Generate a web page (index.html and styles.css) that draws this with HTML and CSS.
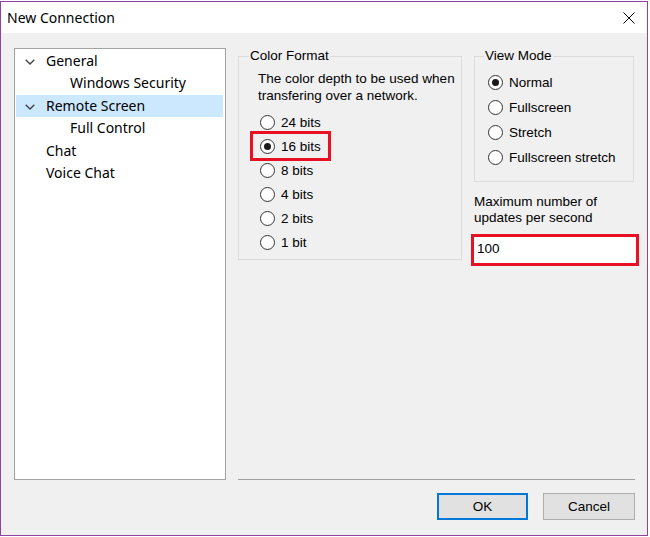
FILE: index.html
```html
<!DOCTYPE html>
<html>
<head>
<meta charset="utf-8">
<link rel="stylesheet" href="styles.css">
</head>
<body>
<div class="window">
  <div class="titlebar">
    <span class="title">New Connection</span>
    <span class="close">
      <svg width="12" height="12" viewBox="0 0 12 12"><path d="M0.5 0.5 L11.5 11.5 M11.5 0.5 L0.5 11.5" stroke="#000" stroke-width="1" fill="none"/></svg>
    </span>
  </div>
  <div class="client">
    <div class="tree">
      <div class="node"><span class="exp"><svg width="10" height="6" viewBox="0 0 10 6"><polyline points="0.7,0.7 5,5 9.3,0.7" fill="none" stroke="#444" stroke-width="1.4"/></svg></span>General</div>
      <div class="node child">Windows Security</div>
      <div class="node selected"><span class="exp"><svg width="10" height="6" viewBox="0 0 10 6"><polyline points="0.7,0.7 5,5 9.3,0.7" fill="none" stroke="#444" stroke-width="1.4"/></svg></span>Remote Screen</div>
      <div class="node child">Full Control</div>
      <div class="node leaf">Chat</div>
      <div class="node leaf">Voice Chat</div>
    </div>
    <div class="panel">
      <div class="groups">
        <fieldset class="group color">
          <legend>Color Format</legend>
          <div class="group-body">
            <p class="desc">The color depth to be used when transfering over a network.</p>
            <div class="radios">
              <div class="radio"><span class="dot"></span>24 bits</div>
              <div class="radio on marked"><span class="dot"></span>16 bits</div>
              <div class="radio"><span class="dot"></span>8 bits</div>
              <div class="radio"><span class="dot"></span>4 bits</div>
              <div class="radio"><span class="dot"></span>2 bits</div>
              <div class="radio"><span class="dot"></span>1 bit</div>
            </div>
          </div>
        </fieldset>
        <div class="side">
          <fieldset class="group view">
            <legend>View Mode</legend>
            <div class="group-body">
              <div class="radio tall on"><span class="dot"></span>Normal</div>
              <div class="radio tall"><span class="dot"></span>Fullscreen</div>
              <div class="radio tall"><span class="dot"></span>Stretch</div>
              <div class="radio tall"><span class="dot"></span>Fullscreen stretch</div>
            </div>
          </fieldset>
          <p class="maxlabel">Maximum number of updates per second</p>
          <div class="textbox">100</div>
        </div>
      </div>
    </div>
    <div class="buttons">
      <button class="btn default">OK</button>
      <button class="btn">Cancel</button>
    </div>
  </div>
</div>
</body>
</html>
```
FILE: styles.css
```css
html, body {
  margin: 0;
  padding: 0;
  background: #ffffff;
}

.window {
  margin-top: 1px;
  width: 648px;
  height: 535px;
  box-sizing: border-box;
  border: 1px solid #8f42a0;
  background: #f0f0f0;
  display: flex;
  flex-direction: column;
}

.titlebar {
  height: 31px;
  background: #ffffff;
  display: flex;
  align-items: center;
  justify-content: space-between;
  font-family: "Noto Sans", sans-serif;
  font-size: 14px;
  color: #000;
}

.title {
  padding-left: 6px;
  line-height: 31px;
}

.close {
  width: 36px;
  height: 31px;
  display: flex;
  align-items: center;
  justify-content: center;
  margin-right: 0;
}

.close svg {
  display: block;
  margin-top: 1px;
}

.client {
  flex: 1;
  display: grid;
  grid-template-columns: 212px 397px;
  grid-template-rows: 432px auto;
  column-gap: 12px;
  padding: 15px 0 0 13px;
  font-family: "Liberation Sans", Arial, sans-serif;
  font-size: 13.5px;
  color: #000;
}

/* tree */
.tree {
  box-sizing: border-box;
  border: 1px solid #a3a3a3;
  background: #ffffff;
  padding: 1px 2px 0 1px;
  font-family: "Noto Sans", sans-serif;
  font-size: 14px;
}

.node {
  height: 22.4px;
  line-height: 22.4px;
  display: flex;
  align-items: center;
  padding-left: 30px;
  white-space: nowrap;
}

.node .exp {
  width: 30px;
  margin-left: -30px;
  display: flex;
  align-items: center;
}

.node .exp svg {
  display: block;
  margin-left: 9px;
  margin-top: 2px;
}

.node.child {
  padding-left: 54px;
}

.node.selected {
  background: #cce8ff;
}

/* right panel */
.panel {
  box-sizing: border-box;
  border-bottom: 1px solid #a0a0a0;
}

.groups {
  display: flex;
  gap: 12px;
  align-items: flex-start;
}

.group {
  margin: 0;
  padding: 0;
  border: 1px solid #dcdcdc;
  min-width: 0;
}

.group legend {
  padding: 0 1px;
  margin-left: 10px;
  line-height: 16px;
  font-size: 13.5px;
}

.group.color {
  width: 224px;
  box-sizing: border-box;
}

.group.color .group-body {
  padding: 6px 0 5px 19px;
}

.desc {
  margin: 0;
  width: 200px;
  line-height: 17px;
}

.radios {
  margin-top: 6px;
  margin-left: 2px;
}

.radio {
  display: flex;
  align-items: center;
  height: 24px;
  white-space: nowrap;
}

.radio.tall {
  height: 25px;
}

.radio .dot {
  width: 15px;
  height: 15px;
  box-sizing: border-box;
  border: 1px solid #333333;
  border-radius: 50%;
  background: #ffffff;
  margin-right: 6px;
  display: flex;
  align-items: center;
  justify-content: center;
  flex: none;
}

.radio.on .dot::after {
  content: "";
  width: 7px;
  height: 7px;
  border-radius: 50%;
  background: #1a1a1a;
}

.radio.marked {
  width: fit-content;
  margin-left: -7px;
  padding: 0 7px;
  outline: 3px solid #e81123;
}

.side {
  width: 161px;
}

.group.view {
  width: 160px;
  box-sizing: border-box;
}

.group.view legend {
  margin-left: 9px;
}

.group.view .group-body {
  padding: 6px 0 11px 13px;
}

.maxlabel {
  margin: 12px 0 0 0;
  line-height: 16px;
}

.textbox {
  margin: 8px 0 0 -3px;
  width: 168px;
  height: 32px;
  box-sizing: border-box;
  border: 3px solid #e81123;
  background: #ffffff;
  padding: 4px 3px 0 3px;
  line-height: 16px;
}

/* buttons */
.buttons {
  grid-column: 2;
  margin-top: 13px;
  display: flex;
  justify-content: flex-end;
  gap: 15px;
  align-items: flex-start;
}

.btn {
  height: 27px;
  width: 92px;
  box-sizing: border-box;
  border: 1px solid #adadad;
  background: #e1e1e1;
  font-family: "Liberation Sans", Arial, sans-serif;
  font-size: 13.5px;
  color: #000;
  padding: 0;
  margin: 0;
}

.btn.default {
  width: 91px;
  border: 2px solid #0078d7;
}
```
